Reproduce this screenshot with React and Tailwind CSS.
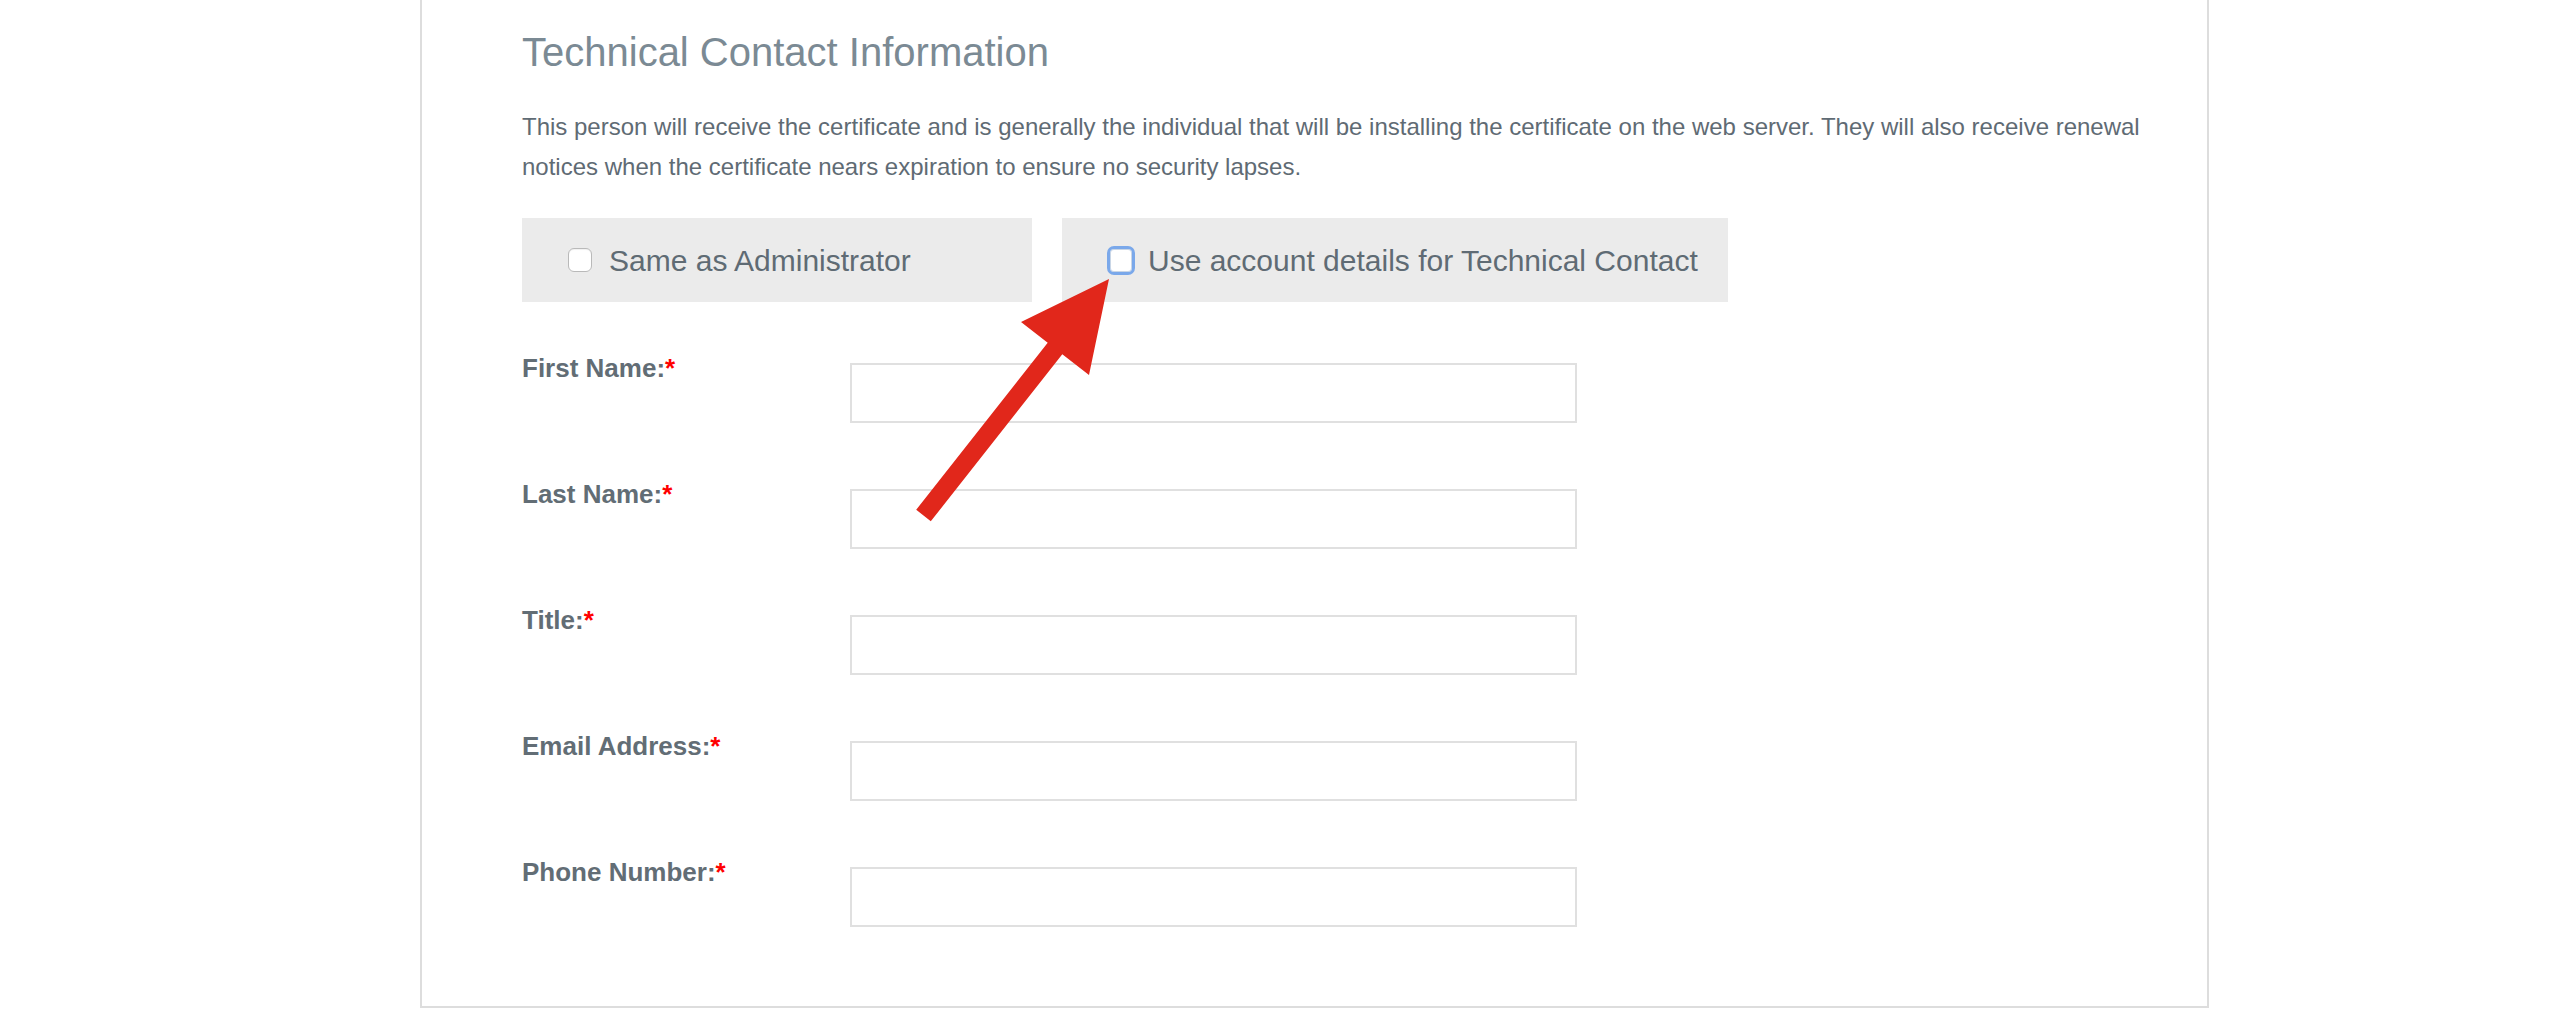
import React from "react";

const fields = ["First Name:", "Last Name:", "Title:", "Email Address:", "Phone Number:"];

const FormRow = ({ label }) => (
  <div className="flex items-start">
    <label className="w-[328px] text-[26px] leading-[30px] font-bold text-[#626d75]">
      {label}
      <span className="text-[#ff0000]">*</span>
    </label>
    <input
      type="text"
      className="mt-[10px] w-[727px] h-[60px] border-2 border-[#e0e0e0] bg-white outline-none"
    />
  </div>
);

export default function App() {
  return (
    <div
      className="relative w-[2560px] h-[1032px] overflow-hidden bg-white"
      style={{ fontFamily: '"Liberation Sans", Arial, Helvetica, sans-serif' }}
    >
      <div className="ml-[420px] w-[1789px] border-2 border-t-0 border-[#dddddd] bg-white pt-[30px] pl-[100px] pr-[43px] pb-[79px]">
        {/* Section heading */}
        <h2 className="text-[40px] leading-[44px] text-[#7b8a94] mb-[33px]">
          Technical Contact Information
        </h2>
        <p className="text-[24px] leading-[40px] text-[#5f6b74]">
          This person will receive the certificate and is generally the individual that will be installing the
          certificate on the web server. They will also receive renewal notices when the certificate nears
          expiration to ensure no security lapses.
        </p>

        {/* Checkbox options */}
        <div className="flex gap-[30px] mt-[31px]">
          <div className="w-[510px] h-[84px] bg-[#ebebeb] flex items-center pl-[46px]">
            <span className="w-[24px] h-[24px] rounded-[6px] border border-[#b9b9b9] bg-white shadow-[inset_0_1px_1px_rgba(0,0,0,0.06)]"></span>
            <span className="ml-[17px] text-[30px] text-[#5f6b74]">Same as Administrator</span>
          </div>
          <div className="h-[84px] bg-[#ebebeb] flex items-center pl-[45px] pr-[30px]">
            <span className="w-[28px] h-[29px] rounded-[7px] border-[3px] border-[#7aa8ea] bg-white shadow-[inset_0_0_0_1px_#c9d6e6]"></span>
            <span className="ml-[13px] text-[30px] text-[#5f6b74]">Use account details for Technical Contact</span>
          </div>
        </div>

        {/* Fields */}
        <div className="flex flex-col gap-[56px] mt-[51px]">
          {fields.map((f) => (
            <FormRow key={f} label={f} />
          ))}
        </div>
      </div>

      {/* annotation arrow */}
      <svg
        className="absolute left-[900px] top-[270px]"
        width="220"
        height="260"
        viewBox="0 0 220 260"
      >
        <polygon
          points="209,9 189,105 162.3,84.3 30.8,251.3 16.2,239.7 147.7,72.7 121,52"
          fill="#e1271b"
        />
      </svg>
    </div>
  );
}
